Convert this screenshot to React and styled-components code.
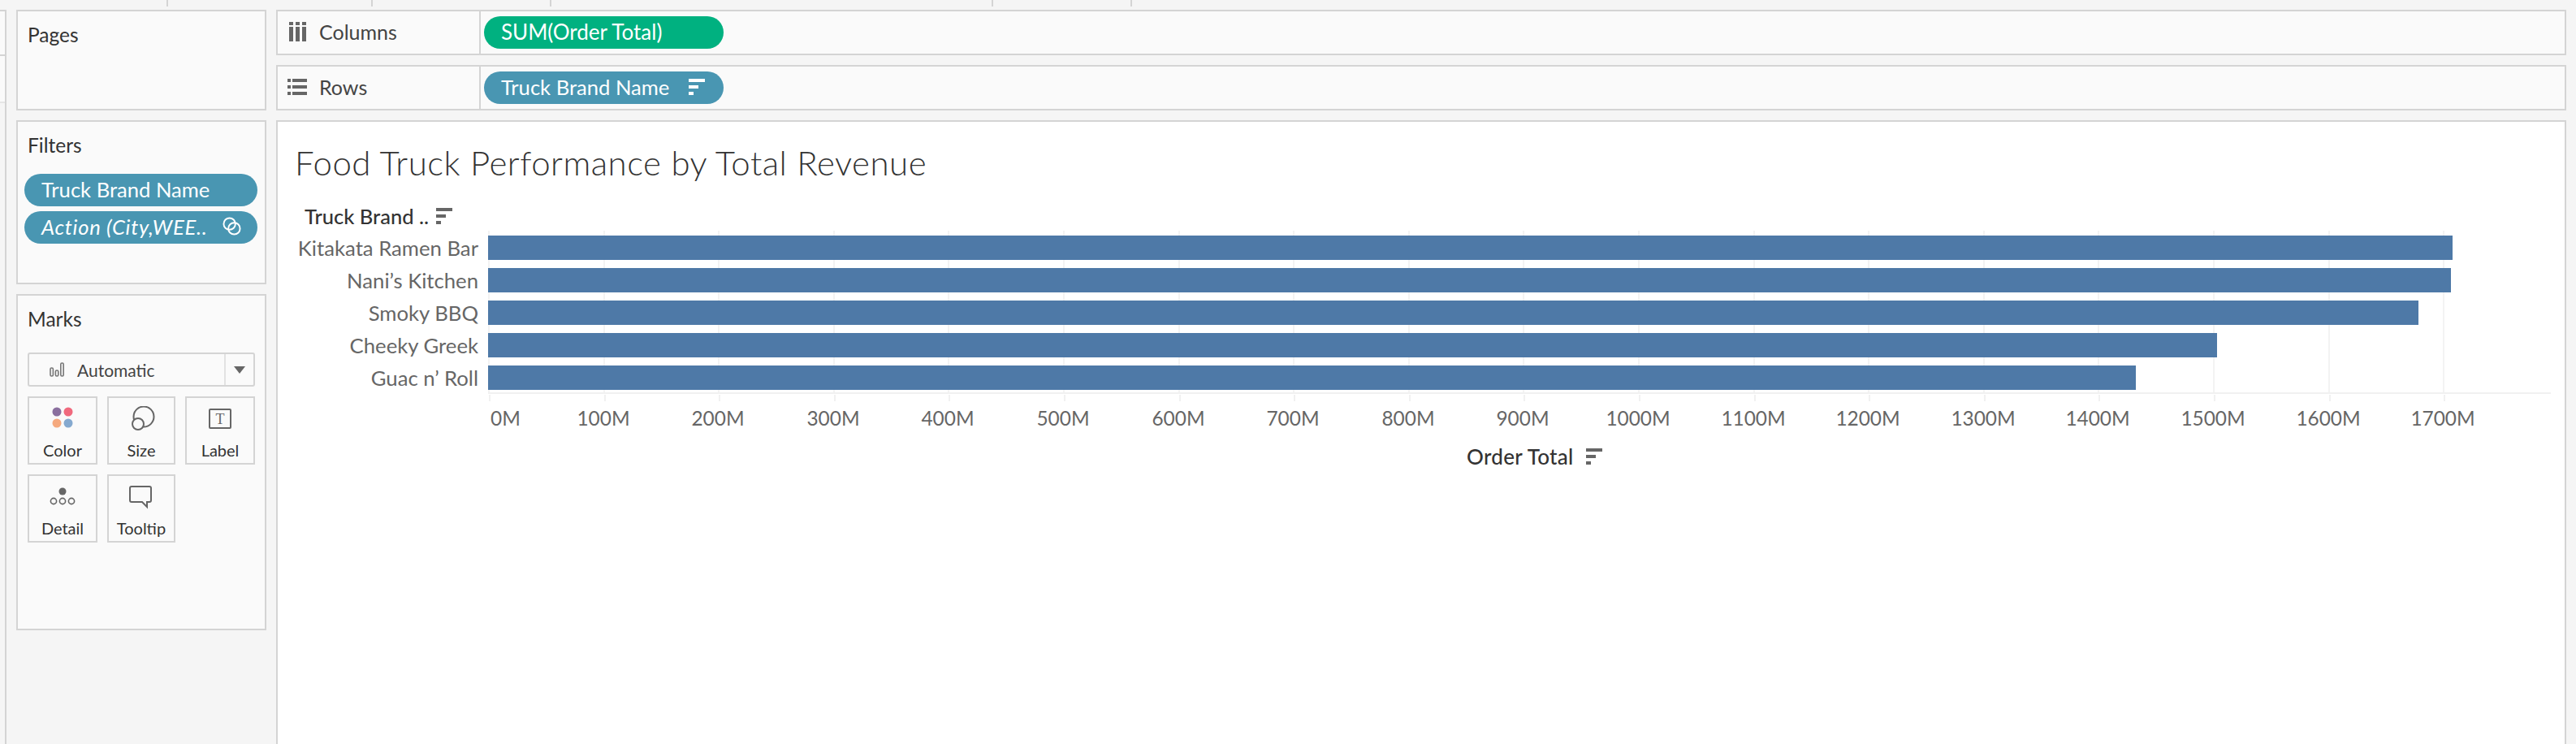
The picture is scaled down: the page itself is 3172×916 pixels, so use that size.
import React from 'react';
import styled, { createGlobalStyle } from 'styled-components';

const GlobalStyle = createGlobalStyle`
    html, body {
        margin: 0;
        padding: 0;
        background: #f5f5f5;
    }
    * {
        box-sizing: border-box;
    }
`;

const Page = styled.div`
    width: 3172px;
    height: 916px;
    overflow: hidden;
    display: flex;
    flex-direction: column;
    background: #f5f5f5;
    font-family: Lato, "Open Sans", sans-serif;
    color: #333333;
`;

const TabStrip = styled.div`
    height: 12px;
    flex: none;
    display: flex;
`;

const TabTick = styled.div`
    width: ${props => props.$width}px;
    height: 8px;
    border-right: 2px solid #d4d4d4;
`;

const Workspace = styled.div`
    flex: 1;
    min-height: 0;
    display: flex;
`;

const DataStrip = styled.div`
    width: 8px;
    flex: none;
    border-right: 2px solid #d4d4d4;
    border-top: 2px solid #d4d4d4;
`;

const DataStripCell = styled.div`
    height: ${props => props.$height}px;
    background: #fafafa;
    border-bottom: 2px solid ${props => props.$line};
`;

const Sidebar = styled.div`
    width: 308px;
    flex: none;
    margin-left: 12px;
    display: flex;
    flex-direction: column;
    gap: 12px;
`;

const Card = styled.div`
    height: ${props => props.$height}px;
    padding: 14px 8px;
    background: #fafafa;
    border: 2px solid #d4d4d4;
`;

const CardTitle = styled.div`
    margin: 0 0 ${props => props.$gap || 0}px 4px;
    height: 30px;
    font-size: 24.5px;
    line-height: 30px;
`;

const PillList = styled.div`
    display: flex;
    flex-direction: column;
    gap: 6px;
    width: 287px;
`;

const Pill = styled.div`
    height: 40px;
    padding: 0 ${props => props.$italic ? 20 : 23}px 3px 21px;
    display: flex;
    align-items: center;
    justify-content: space-between;
    border-radius: 20px;
    background: ${props => props.$green ? '#00b180' : '#4996b2'};
    color: #ffffff;
    font-size: ${props => props.$green ? 26 : 25.6}px;
    font-style: ${props => props.$italic ? 'italic' : 'normal'};
    letter-spacing: ${props => props.$italic ? 0.7 : 0}px;
    white-space: nowrap;
`;

const ShelfPill = styled(Pill)`
    width: 295px;
    margin-left: 4px;
`;

const MarksBody = styled.div`
    margin-left: 4px;
    width: 280px;
    display: flex;
    flex-direction: column;
    gap: 12px;
`;

const MarkSelect = styled.div`
    height: 42px;
    display: flex;
    align-items: stretch;
    border: 2px solid #d4d4d4;
    border-radius: 3px;
`;

const MarkSelectValue = styled.div`
    width: 242px;
    padding-left: 25px;
    display: flex;
    align-items: center;
    gap: 16px;
    font-size: 21px;
    color: #444444;
    border-right: 2px solid #e2e2e2;
`;

const MarkSelectCaret = styled.div`
    flex: 1;
    display: flex;
    align-items: center;
    justify-content: center;
`;

const MarkGrid = styled.div`
    display: grid;
    grid-template-columns: 86px 84px 86px;
    grid-auto-rows: 84px;
    gap: 12px;
`;

const MarkButton = styled.div`
    display: flex;
    flex-direction: column;
    align-items: center;
    padding-top: 10px;
    border: 2px solid #d4d4d4;
    font-size: 20px;
    line-height: 24px;
    color: #333333;
`;

const MarkIcon = styled.svg`
    width: 36px;
    height: 34px;
    margin-bottom: 8px;
    flex: none;
    display: block;
`;

const Main = styled.div`
    width: 2820px;
    flex: none;
    margin-left: 12px;
    display: flex;
    flex-direction: column;
    gap: 12px;
`;

const Shelf = styled.div`
    height: 56px;
    flex: none;
    display: flex;
    align-items: center;
    background: #fafafa;
    border: 2px solid #d4d4d4;
`;

const ShelfLabel = styled.div`
    width: 250px;
    height: 100%;
    padding: 0 0 2px 12px;
    display: flex;
    align-items: center;
    border-right: 2px solid #d4d4d4;
    font-size: 25px;
    color: #444444;
`;

const ShelfIcon = styled.svg`
    width: 27px;
    height: 24px;
    margin-right: 12px;
    flex: none;
    fill: #666666;
`;

const Viz = styled.div`
    flex: 1;
    min-height: 0;
    padding: 30px 0 0 21px;
    background: #ffffff;
    border: 2px solid #d4d4d4;
    border-bottom: none;
`;

const VizTitle = styled.h1`
    margin: 0;
    height: 40px;
    font-size: 42px;
    line-height: 40px;
    font-weight: 300;
    letter-spacing: 0.5px;
    color: #333333;
`;

const FieldHeader = styled.div`
    margin: 34px 0 0 12px;
    height: 24px;
    display: flex;
    align-items: center;
    gap: 9px;
    font-size: 25.5px;
    line-height: 24px;
    font-weight: 500;
    color: #333333;
`;

const ChartBody = styled.div`
    margin: 6px 0 0 -21px;
    display: flex;
    align-items: flex-start;
    gap: 12px;
`;

const RowLabels = styled.div`
    width: 247px;
    flex: none;
    padding-top: 1px;
    display: flex;
    flex-direction: column;
`;

const RowLabel = styled.div`
    height: 40px;
    line-height: 40px;
    text-align: right;
    font-size: 25.7px;
    color: #666666;
    white-space: nowrap;
`;

const Plot = styled.svg`
    display: block;
    flex: none;
`;

const TickText = styled.text`
    font-size: 24.4px;
    fill: #666666;
`;

const AxisTitle = styled.div`
    margin: 13px 0 0 1443px;
    height: 30px;
    display: flex;
    align-items: center;
    gap: 15px;
    font-size: 26px;
    letter-spacing: 0.3px;
    font-weight: 500;
    color: #333333;
`;

const TABS = [207, 252, 220, 544, 171];

const BARS = [
    { name: 'Kitakata Ramen Bar', width: 2419 },
    { name: 'Nani\u2019s Kitchen', width: 2417 },
    { name: 'Smoky BBQ', width: 2377 },
    { name: 'Cheeky Greek', width: 2129 },
    { name: 'Guac n\u2019 Roll', width: 2029 },
];

const TICK_STEP = 141.6;
const TICKS = Array.from({ length: 18 }, (_, i) => i);

const SortIcon = ({ color = '#666666' }) => (
    <svg width="20" height="20" viewBox="0 0 20 20" fill={color} style={{ flex: 'none' }}>
        <rect x="0" y="0" width="20" height="4" />
        <rect x="0" y="8" width="12" height="4" />
        <rect x="0" y="16" width="6" height="4" />
    </svg>
);

const ColumnsIcon = () => (
    <ShelfIcon viewBox="0 0 27 24">
        <path d="M2 0h5v4H2zM2 6h5v18H2zM10 0h5v4h-5zM10 6h5v18h-5zM18 0h5v4h-5zM18 6h5v18h-5z" />
    </ShelfIcon>
);

const RowsIcon = () => (
    <ShelfIcon viewBox="0 0 27 24">
        <path d="M0 2h4v4H0zM6 2h18v4H6zM0 10h4v4H0zM6 10h18v4H6zM0 18h4v4H0zM6 18h18v4H6z" />
    </ShelfIcon>
);

const App = () => (
    <Page>
        <GlobalStyle />
        <TabStrip>
            {TABS.map((width, i) => <TabTick key={i} $width={width} />)}
        </TabStrip>
        <Workspace>
            <DataStrip>
                <DataStripCell $height={55} $line="#d4d4d4" />
                <DataStripCell $height={58} $line="#e6e6e6" />
            </DataStrip>
            <Sidebar>
                <Card $height={124}>
                    <CardTitle>Pages</CardTitle>
                </Card>
                <Card $height={202}>
                    <CardTitle $gap={20}>Filters</CardTitle>
                    <PillList>
                        <Pill>Truck Brand Name</Pill>
                        <Pill $italic>
                            Action (City,WEE..
                            <svg width="23" height="23" viewBox="0 0 24 24" fill="none" stroke="#ffffff" strokeWidth="2">
                                <circle cx="9" cy="9" r="7.5" />
                                <circle cx="15" cy="15" r="7.5" />
                            </svg>
                        </Pill>
                    </PillList>
                </Card>
                <Card $height={414}>
                    <CardTitle $gap={26}>Marks</CardTitle>
                    <MarksBody>
                        <MarkSelect>
                            <MarkSelectValue>
                                <svg width="18" height="18" viewBox="0 0 18 18" fill="none" stroke="#777777" strokeWidth="1.6">
                                    <rect x="1" y="7" width="3.4" height="10" rx="1.5" />
                                    <rect x="7.4" y="10" width="3.4" height="7" rx="1.5" />
                                    <rect x="13.8" y="1" width="3.4" height="16" rx="1.5" />
                                </svg>
                                Automatic
                            </MarkSelectValue>
                            <MarkSelectCaret>
                                <svg width="14" height="9" viewBox="0 0 14 9" fill="#666666">
                                    <path d="M0 0h14L7 9z" />
                                </svg>
                            </MarkSelectCaret>
                        </MarkSelect>
                        <MarkGrid>
                            <MarkButton>
                                <MarkIcon viewBox="0 0 36 34">
                                    <circle cx="11" cy="7" r="5.5" fill="#8a6f9e" />
                                    <circle cx="25" cy="7" r="5.5" fill="#f0697d" />
                                    <circle cx="11" cy="21" r="5.5" fill="#f5a97e" />
                                    <circle cx="25" cy="21" r="5.5" fill="#85a9cf" />
                                </MarkIcon>
                                Color
                            </MarkButton>
                            <MarkButton>
                                <MarkIcon viewBox="0 0 36 34" fill="#fafafa" stroke="#666666" strokeWidth="2">
                                    <circle cx="21" cy="13" r="12.5" />
                                    <circle cx="14" cy="22" r="7" />
                                </MarkIcon>
                                Size
                            </MarkButton>
                            <MarkButton>
                                <MarkIcon viewBox="0 0 36 34">
                                    <rect x="5" y="4" width="26" height="23" rx="1" fill="none" stroke="#666666" strokeWidth="2" />
                                    <text x="18" y="22" textAnchor="middle" fontFamily="'Liberation Serif', serif" fontSize="18" fill="#666666">T</text>
                                </MarkIcon>
                                Label
                            </MarkButton>
                            <MarkButton>
                                <MarkIcon viewBox="0 0 36 34">
                                    <circle cx="18" cy="9" r="4.5" fill="#666666" />
                                    <g fill="none" stroke="#666666" strokeWidth="1.6">
                                        <circle cx="7" cy="21" r="3.6" />
                                        <circle cx="18" cy="21" r="3.6" />
                                        <circle cx="29" cy="21" r="3.6" />
                                    </g>
                                </MarkIcon>
                                Detail
                            </MarkButton>
                            <MarkButton>
                                <MarkIcon viewBox="0 0 36 34" fill="none" stroke="#666666" strokeWidth="2">
                                    <path d="M6 3h22a2 2 0 0 1 2 2v15a2 2 0 0 1-2 2h-3v6l-6-6H6a2 2 0 0 1-2-2V5a2 2 0 0 1 2-2z" />
                                </MarkIcon>
                                Tooltip
                            </MarkButton>
                        </MarkGrid>
                    </MarksBody>
                </Card>
            </Sidebar>
            <Main>
                <Shelf>
                    <ShelfLabel><ColumnsIcon />Columns</ShelfLabel>
                    <ShelfPill $green>SUM(Order Total)</ShelfPill>
                </Shelf>
                <Shelf>
                    <ShelfLabel><RowsIcon />Rows</ShelfLabel>
                    <ShelfPill>
                        Truck Brand Name
                        <SortIcon color="#ffffff" />
                    </ShelfPill>
                </Shelf>
                <Viz>
                    <VizTitle>Food Truck Performance by Total Revenue</VizTitle>
                    <FieldHeader>
                        Truck Brand ..
                        <SortIcon />
                    </FieldHeader>
                    <ChartBody>
                        <RowLabels>
                            {BARS.map(bar => <RowLabel key={bar.name}>{bar.name}</RowLabel>)}
                        </RowLabels>
                        <Plot width="2556" height="250" viewBox="0 0 2556 250">
                            {TICKS.map(i => {
                                const x = Math.round(i * TICK_STEP);
                                return (
                                    <g key={i}>
                                        <rect x={x} y="0" width="2" height="200" fill="#f3f3f3" />
                                        <rect x={x + 1} y="202" width="2" height="8" fill="#f1f1f1" />
                                        <TickText x={i === 0 ? 3 : x} y="240" textAnchor={i === 0 ? 'start' : 'middle'}>
                                            {i * 100}M
                                        </TickText>
                                    </g>
                                );
                            })}
                            <rect x="0" y="199" width="2540" height="2" fill="#f1f1f1" />
                            {BARS.map((bar, i) => (
                                <rect key={bar.name} x="0" y={6 + i * 40} width={bar.width} height="30" fill="#4e79a7" />
                            ))}
                        </Plot>
                    </ChartBody>
                    <AxisTitle>
                        Order Total
                        <SortIcon />
                    </AxisTitle>
                </Viz>
            </Main>
        </Workspace>
    </Page>
);

export default App;
